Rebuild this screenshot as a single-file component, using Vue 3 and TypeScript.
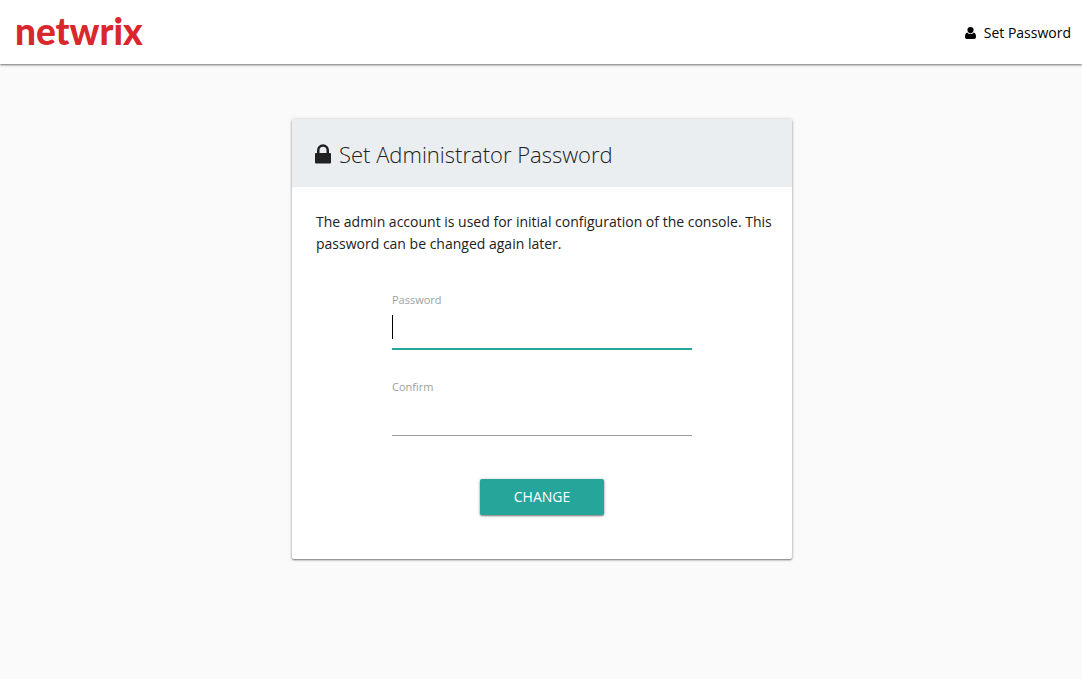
<script setup lang="ts">
import { ref, onMounted } from 'vue'

const password = ref<string>('')
const confirmation = ref<string>('')
const focused = ref<boolean>(true)
const passwordInput = ref<HTMLInputElement | null>(null)

onMounted(() => passwordInput.value?.focus())
</script>

<template>
  <div class="page">
    <header class="navbar">
      <a class="brand" href="#">netwrix</a>
      <a class="nav-link" href="#">
        <svg class="user-icon" viewBox="0 0 11 12" aria-hidden="true">
          <path d="M5.5 0a3.1 3.1 0 0 1 3.1 3.1c0 1.8-1.3 3.300-3.100 3.300S2.400 4.900 2.400 3.100A3.100 3.100 0 0 1 5.500 0zM2.300 5.500C3.100 6.500 4.200 7 5.500 7S7.900 6.500 8.700 5.500C10.400 5.800 11 7.500 11 9.800 11 11.200 10.200 12 9 12H2C.8 12 0 11.200 0 9.800 0 7.500.6 5.800 2.300 5.500z" />
        </svg>
        <span>Set Password</span>
      </a>
    </header>

    <main class="content">
      <section class="card">
        <div class="card-header">
          <svg class="lock-icon" viewBox="0 0 16 20" aria-hidden="true">
            <path fill-rule="evenodd" d="M1 9h1V6.200a6 6 0 0 1 12 0V9h1a1 1 0 0 1 1 1v8.500a1 1 0 0 1-1 1H1a1 1 0 0 1-1-1V10a1 1 0 0 1 1-1zM4.500 9h7V6.200a3.500 3.500 0 0 0-7 0z" />
          </svg>
          <h1>Set Administrator Password</h1>
        </div>
        <div class="card-body">
          <p>The admin account is used for initial configuration of the console. This password can be changed again later.</p>
          <form @submit.prevent>
            <div class="field">
              <label for="password">Password</label>
              <div class="control">
                <input
                  id="password"
                  ref="passwordInput"
                  v-model="password"
                  type="password"
                  @focus="focused = true"
                  @blur="focused = false"
                />
                <span v-if="focused && !password" class="caret" aria-hidden="true"></span>
              </div>
            </div>
            <div class="field">
              <label for="confirm">Confirm</label>
              <div class="control">
                <input id="confirm" v-model="confirmation" type="password" />
              </div>
            </div>
            <button type="submit">CHANGE</button>
          </form>
        </div>
      </section>
    </main>
  </div>
</template>

<style>
body {
  margin: 0;
  background: #fafafa;
}
</style>

<style scoped>
.page {
  min-height: 100vh;
  font-family: "Segoe UI", "Open Sans", "Noto Sans", sans-serif;
  font-size: 14px;
  line-height: 22px;
  color: #212121;
  background: #fafafa;
}

.navbar {
  display: flex;
  align-items: center;
  justify-content: space-between;
  height: 64px;
  padding: 0 11px 0 15px;
  background: #fff;
  box-shadow: 0 1px 2px rgba(0, 0, 0, 0.5), 0 0 4px rgba(0, 0, 0, 0.12);
}

.brand {
  padding-bottom: 2px;
  font-family: Lato, sans-serif;
  font-size: 37px;
  font-weight: 900;
  line-height: 60px;
  color: #d9272e;
  text-decoration: none;
}

.nav-link {
  display: flex;
  align-items: center;
  gap: 8px;
  padding-top: 2px;
  color: #000;
  text-decoration: none;
}

.user-icon {
  width: 11px;
  height: 12px;
}

.content {
  padding: 55px 15px 55px 17px;
}

.card {
  max-width: 500px;
  margin: 0 auto;
  border-radius: 2px;
  background: #fff;
  box-shadow: 0 1px 2px rgba(0, 0, 0, 0.5), 0 0 4px rgba(0, 0, 0, 0.12);
  overflow: hidden;
}

.card-header {
  display: flex;
  align-items: center;
  gap: 8px;
  padding: 19px 23px 17px;
  background: #eaeef1;
}

.lock-icon {
  width: 16px;
  height: 20px;
  fill: #212121;
}

h1 {
  margin: 0;
  font-size: 22px;
  font-weight: 300;
  line-height: 32px;
}

.card-body {
  padding: 24px 0 44px;
}

p {
  margin: 0;
  padding: 0 12px 0 24px;
}

form {
  display: flex;
  flex-direction: column;
  align-items: center;
  padding: 37px 24px 0;
}

.field {
  width: 100%;
  max-width: 300px;
  height: 87px;
}

label {
  display: block;
  font-size: 11px;
  line-height: 16px;
  color: #9e9e9e;
}

.control {
  position: relative;
}

input {
  display: block;
  box-sizing: border-box;
  width: 100%;
  height: 41px;
  padding: 0;
  border: 0;
  border-bottom: 1px solid #9e9e9e;
  outline: 0;
  background: transparent;
  font: inherit;
  font-size: 16px;
  caret-color: transparent;
}

input:focus {
  border-bottom-color: #26a69a;
  box-shadow: 0 1px 0 #26a69a;
}

input:not(:placeholder-shown) {
  caret-color: #000;
}

.caret {
  position: absolute;
  top: 7px;
  left: 0;
  width: 1px;
  height: 24px;
  background: #000;
  pointer-events: none;
}

button {
  height: 36px;
  margin-top: 13px;
  padding: 0 34px;
  border: 0;
  border-radius: 2px;
  background: #26a69a;
  box-shadow: 0 1px 2px rgba(0, 0, 0, 0.5), 0 0 4px rgba(0, 0, 0, 0.12);
  color: #fff;
  font: inherit;
  cursor: pointer;
}
</style>
